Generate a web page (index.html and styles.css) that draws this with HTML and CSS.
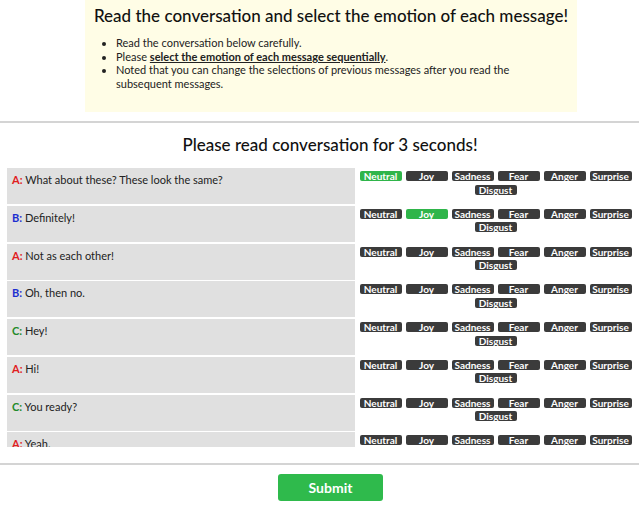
FILE: index.html
```html
<!DOCTYPE html>
<html>
<head>
<meta charset="utf-8">
<link rel="stylesheet" href="styles.css">
</head>
<body>
<div class="notice">
  <h1 class="notice-title">Read the conversation and select the emotion of each message!</h1>
  <ul class="notice-list">
    <li>Read the conversation below carefully.</li>
    <li>Please <u class="strong">select the emotion of each message sequentially</u>.</li>
    <li>Noted that you can change the selections of previous messages after you read the subsequent messages.</li>
  </ul>
</div>
<div class="rule"></div>
<h2 class="timer">Please read conversation for 3 seconds!</h2>
<div class="convo">
  <div class="row">
    <div class="msg"><span class="spk a">A:</span> What about these? These look the same?</div>
    <div class="opts"><span class="btn on">Neutral</span> <span class="btn">Joy</span> <span class="btn">Sadness</span> <span class="btn">Fear</span> <span class="btn">Anger</span> <span class="btn">Surprise</span> <span class="btn">Disgust</span></div>
  </div>
  <div class="row">
    <div class="msg"><span class="spk b">B:</span> Definitely!</div>
    <div class="opts"><span class="btn">Neutral</span> <span class="btn on">Joy</span> <span class="btn">Sadness</span> <span class="btn">Fear</span> <span class="btn">Anger</span> <span class="btn">Surprise</span> <span class="btn">Disgust</span></div>
  </div>
  <div class="row">
    <div class="msg"><span class="spk a">A:</span> Not as each other!</div>
    <div class="opts"><span class="btn">Neutral</span> <span class="btn">Joy</span> <span class="btn">Sadness</span> <span class="btn">Fear</span> <span class="btn">Anger</span> <span class="btn">Surprise</span> <span class="btn">Disgust</span></div>
  </div>
  <div class="row">
    <div class="msg"><span class="spk b">B:</span> Oh, then no.</div>
    <div class="opts"><span class="btn">Neutral</span> <span class="btn">Joy</span> <span class="btn">Sadness</span> <span class="btn">Fear</span> <span class="btn">Anger</span> <span class="btn">Surprise</span> <span class="btn">Disgust</span></div>
  </div>
  <div class="row">
    <div class="msg"><span class="spk c">C:</span> Hey!</div>
    <div class="opts"><span class="btn">Neutral</span> <span class="btn">Joy</span> <span class="btn">Sadness</span> <span class="btn">Fear</span> <span class="btn">Anger</span> <span class="btn">Surprise</span> <span class="btn">Disgust</span></div>
  </div>
  <div class="row">
    <div class="msg"><span class="spk a">A:</span> Hi!</div>
    <div class="opts"><span class="btn">Neutral</span> <span class="btn">Joy</span> <span class="btn">Sadness</span> <span class="btn">Fear</span> <span class="btn">Anger</span> <span class="btn">Surprise</span> <span class="btn">Disgust</span></div>
  </div>
  <div class="row">
    <div class="msg"><span class="spk c">C:</span> You ready?</div>
    <div class="opts"><span class="btn">Neutral</span> <span class="btn">Joy</span> <span class="btn">Sadness</span> <span class="btn">Fear</span> <span class="btn">Anger</span> <span class="btn">Surprise</span> <span class="btn">Disgust</span></div>
  </div>
  <div class="row">
    <div class="msg"><span class="spk a">A:</span> Yeah.</div>
    <div class="opts"><span class="btn">Neutral</span> <span class="btn">Joy</span> <span class="btn">Sadness</span> <span class="btn">Fear</span> <span class="btn">Anger</span> <span class="btn">Surprise</span> <span class="btn">Disgust</span></div>
  </div>
</div>
<div class="rule rule-bottom"></div>
<div class="actions"><span class="submit">Submit</span></div>
</body>
</html>
```
FILE: styles.css
```css
html, body {
  margin: 0;
  padding: 0;
  background: #ffffff;
}
body {
  font-family: Lato, "Open Sans", sans-serif;
  color: #222;
  width: 640px;
  height: 505px;
  overflow: hidden;
}
.notice {
  margin-left: 85px;
  width: 492px;
  height: 112px;
  background: #fffde6;
  box-sizing: border-box;
  padding-top: 4px;
}
.notice-title {
  margin: 0;
  font-size: 17px;
  font-weight: 500;
  text-align: center;
  line-height: 24px;
  white-space: nowrap;
  color: #111;
}
.notice-list {
  margin: 8px 0 0 0;
  padding-left: 31px;
  padding-right: 40px;
  font-size: 11px;
  line-height: 13.7px;
  color: #222;
}
.strong {
  font-weight: 700;
}
.rule {
  margin-top: 9px;
  height: 2px;
  background: #d4d4d4;
  width: 639px;
}
.timer {
  margin: 11px 0 0 20px;
  font-size: 17px;
  font-weight: 500;
  text-align: center;
  line-height: 22px;
  color: #111;
}
.convo {
  margin-top: 12px;
  margin-left: 7px;
  width: 629px;
  height: 279px;
  overflow: hidden;
}
.row {
  display: flex;
  height: 36px;
  margin-bottom: 1.75px;
}
.msg {
  width: 348px;
  background: #e0e0e0;
  box-sizing: border-box;
  padding: 5px 5px;
  font-size: 11px;
  line-height: 14px;
  color: #222;
}
.spk {
  font-weight: 700;
}
.spk.a { color: #e0201e; }
.spk.b { color: #1c2fd0; }
.spk.c { color: #1f8a2a; }
.opts {
  width: 281px;
  box-sizing: border-box;
  padding-top: 3px;
  text-align: center;
  font-size: 0;
  line-height: 13.5px;
}
.btn {
  display: inline-block;
  width: 42px;
  height: 10px;
  margin: 0 2px;
  vertical-align: top;
  background: #3b3b3b;
  color: #fff;
  border-radius: 2px;
  font-size: 10px;
  font-weight: 700;
  line-height: 10px;
  text-align: center;
}
.btn.on {
  background: #2fb54a;
}
.rule-bottom {
  margin-top: 16px;
}
.actions {
  padding: 9px 0 0 278px;
}
.submit {
  display: inline-block;
  width: 105px;
  height: 27px;
  background: #2fba4c;
  color: #fff;
  border-radius: 3px;
  font-size: 14px;
  font-weight: 700;
  line-height: 27px;
  text-align: center;
}
```
